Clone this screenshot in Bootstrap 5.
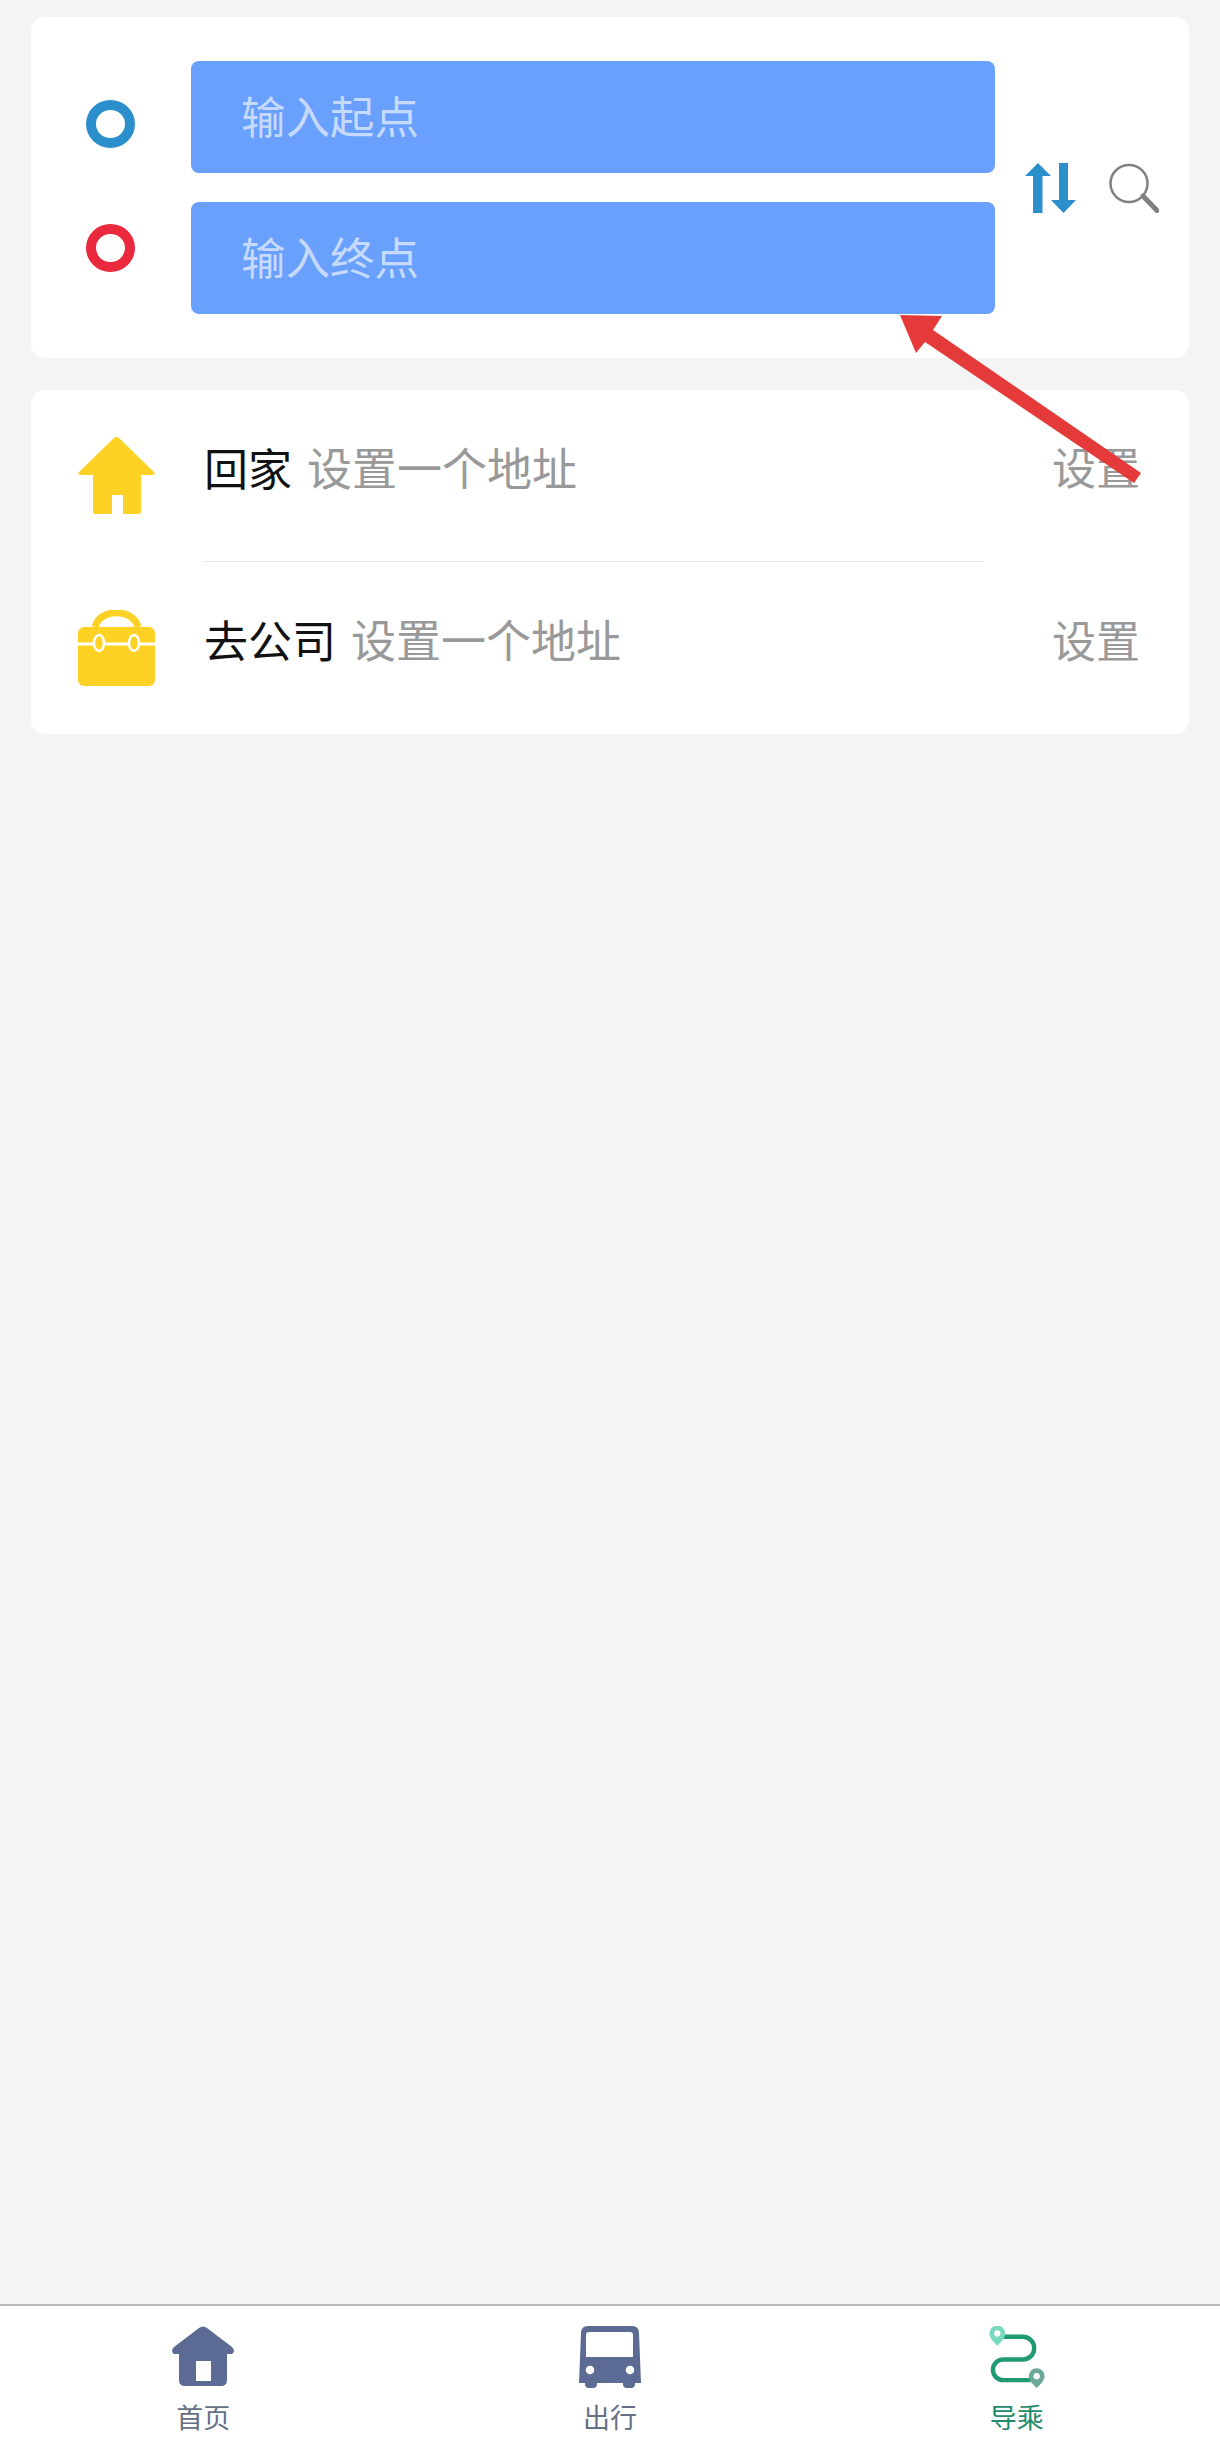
<!DOCTYPE html>
<html lang="zh-CN">
<head>
    <meta charset="UTF-8" />
    <title>导乘</title>
    <meta name="viewport" content="width=device-width, initial-scale=1" />
    <link href="https://cdn.jsdelivr.net/npm/bootstrap@5.3.0/dist/css/bootstrap.min.css" rel="stylesheet" />
    <style>
        body {
            background-color: #f4f4f4;
            font-family: "Liberation Sans", "Noto Sans CJK SC", sans-serif;
            font-size: 44px;
            color: #111;
        }
        .page-wrap { height: 2444px; position: relative; overflow: hidden; }
        .page-main { padding: 17px 31px 0; gap: 32px; }
        .panel-box { border: 0; border-radius: 14px; background: #fff; }
        .route-panel { height: 341px; padding-left: 55px; }
        .ring-col { gap: 76px; margin-right: 56px; margin-bottom: 3px; }
        .ring-dot { width: 49px; height: 48px; border: 10px solid #2b8fcc; border-radius: 50%; }
        .ring-dot.ring-end { border-color: #ea2a3c; }
        .field-col { width: 804px; gap: 29px; margin-right: 30px; }
        .place-field {
            height: 112px;
            background: #699ffd;
            border: 0;
            border-radius: 8px;
            color: #c5dafc;
            font-size: 44.500px;
            line-height: 1;
            padding: 4px 0 0 50px;
            display: flex;
            align-items: center;
        }
        .swap-icon { margin-right: 33px; }
        .addr-panel { height: 344px; }
        .addr-row { height: 171px; padding: 0 49px 0 47px; }
        .addr-row:last-child { height: 172px; }
        .addr-icon { margin-right: 49px; flex: none; }
        .addr-text { padding-bottom: 10px; line-height: 1.2; }
        .addr-hint { color: #999; }
        .addr-text .addr-hint { font-size: 45px; margin-left: 15px; }
        .addr-line { margin-left: 173px; width: 780px; border-top: 1px solid #e8e8e8; }
        .tab-bar { height: 140px; background: #fff; border-top: 2px solid #b9b9b9; }
        .tab-item { flex: 1 1 0; padding-top: 20px; color: #667085; font-size: 27px; line-height: 1.2; }
        .tab-item svg { height: 62px; margin-bottom: 15px; flex: none; }
        .tab-item.tab-on { color: #1f8a6d; }
        .note-arrow { position: absolute; left: 880px; top: 300px; }
    </style>
</head>
<body>
    <div class="page-wrap d-flex flex-column">
        <div class="page-main flex-grow-1 d-flex flex-column">
            <div class="card panel-box route-panel flex-row align-items-center">
                <div class="ring-col d-flex flex-column">
                    <div class="ring-dot"></div>
                    <div class="ring-dot ring-end"></div>
                </div>
                <div class="field-col d-flex flex-column">
                    <div class="form-control place-field">输入起点</div>
                    <div class="form-control place-field">输入终点</div>
                </div>
                <svg class="swap-icon" width="51" height="50" viewBox="0 0 51 50" fill="#2b8fcc">
                    <path d="M13 0 26 13H17.500V50H8V13H0Z" />
                    <path d="M34 0H43V37H51L38.500 50 26 37H34Z" />
                </svg>
                <svg width="50" height="50" viewBox="0 0 50 50" fill="none" stroke="#808080">
                    <circle cx="20" cy="20.500" r="18.500" stroke-width="2.500" />
                    <path d="M34 33 48 47.500" stroke-width="5" stroke-linecap="round" />
                </svg>
            </div>

            <div class="card panel-box addr-panel">
                <div class="addr-row d-flex align-items-center">
                    <svg class="addr-icon" width="77" height="77" viewBox="0 0 77 77" fill="#fdd225">
                        <path fill-rule="evenodd" d="M36 1Q38.500 -1 41 1L76 35Q78 38 74 38H63V75Q63 77 61 77H17Q15 77 15 75V38H3Q-1 38 1 35ZM34 58V77H45V58Z" />
                    </svg>
                    <div class="addr-text flex-grow-1">回家<span class="addr-hint">设置一个地址</span></div>
                    <div class="addr-text addr-hint">设置</div>
                </div>
                <div class="addr-line"></div>
                <div class="addr-row d-flex align-items-center">
                    <svg class="addr-icon" width="77" height="76" viewBox="0 0 77 76" fill="#fdd225">
                        <path d="M17 17C22 -2 55 -2 60 17" fill="none" stroke="#fdd225" stroke-width="7" />
                        <rect x="0" y="17" width="77" height="59" rx="6" />
                        <path d="M0 34H77" stroke="#fff" stroke-width="3" />
                        <ellipse cx="21" cy="33" rx="5" ry="8" stroke="#fff" stroke-width="2.500" />
                        <ellipse cx="56" cy="33" rx="5" ry="8" stroke="#fff" stroke-width="2.500" />
                    </svg>
                    <div class="addr-text flex-grow-1">去公司<span class="addr-hint">设置一个地址</span></div>
                    <div class="addr-text addr-hint">设置</div>
                </div>
            </div>
        </div>

        <div class="tab-bar d-flex">
            <div class="tab-item d-flex flex-column align-items-center">
                <svg width="62" height="62" viewBox="0 0 62 62" fill="#5b6b93">
                    <path fill-rule="evenodd" d="M27 2Q31 -1 35 2L60 21Q64 25 60 28H55V54Q55 60 49 60H13Q7 60 7 54V28H2Q-2 25 2 21ZM24 35V55H39V35Z" />
                </svg>
                <span>首页</span>
            </div>
            <div class="tab-item d-flex flex-column align-items-center">
                <svg width="62" height="62" viewBox="0 0 62 62" fill="#5b6b93">
                    <path fill-rule="evenodd" d="M9 0H53Q60 0 60 7L62 57H0L2 7Q2 0 9 0ZM10 6Q7 6 7 9V31H54V9Q54 6 51 6Z" />
                    <rect x="6" y="50" width="12" height="12" rx="4" />
                    <rect x="44" y="50" width="12" height="12" rx="4" />
                    <circle cx="11" cy="44" r="4.300" fill="#fff" />
                    <circle cx="51" cy="44" r="4.300" fill="#fff" />
                </svg>
                <span>出行</span>
            </div>
            <div class="tab-item tab-on d-flex flex-column align-items-center">
                <svg width="56" height="62" viewBox="0 0 56 63">
                    <path d="M14 11H34a11.500 11.500 0 0 1 0 23H14a10.500 10.500 0 0 0 0 21H42" fill="none" stroke="#1f9a73" stroke-width="4.500" />
                    <path d="M8 20C4 16 0 12 0 7.500a7.500 7.500 0 0 1 16 0C16 12 12 16 8 20Z" fill="#7bd8c0" />
                    <circle cx="8" cy="7.500" r="3.200" fill="#fff" />
                    <path d="M48 63C44 59 40 55 40 51a8 8 0 0 1 16 0C56 55 52 59 48 63Z" fill="#6aa89a" />
                    <circle cx="48" cy="51" r="3.200" fill="#fff" />
                </svg>
                <span>导乘</span>
            </div>
        </div>

        <svg class="note-arrow" width="300" height="200" viewBox="0 0 300 200" fill="#e53a3a">
            <path d="M20 15 62 16 53 30 261 173 254 183 45 42 36 53Z" />
        </svg>
    </div>

    <script src="https://cdn.jsdelivr.net/npm/bootstrap@5.3.0/dist/js/bootstrap.bundle.min.js"></script>
</body>
</html>
